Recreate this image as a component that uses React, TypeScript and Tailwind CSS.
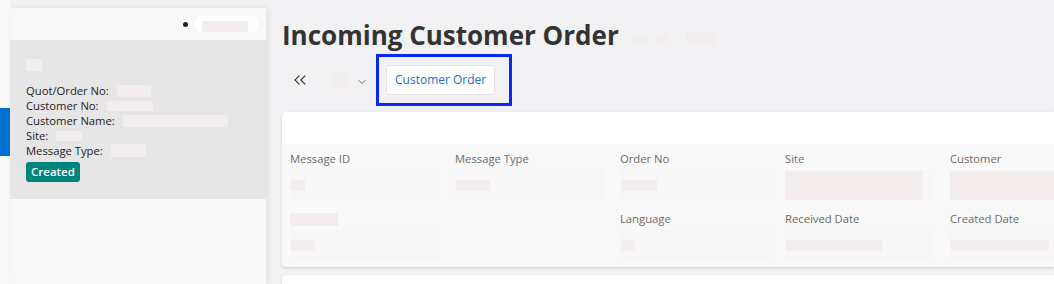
import { ChevronsLeft, ChevronDown } from "lucide-react";

const ph = "bg-[#f3eded]";

interface Field {
  label?: string;
  value?: string;
}

const ROW1: Field[] = [
  { label: "Message ID", value: "w-[14px]" },
  { label: "Message Type", value: "w-[34px]" },
  { label: "Order No", value: "w-[36px]" },
  { label: "Site", value: "big" },
  { label: "Customer", value: "big" },
];

const ROW2: Field[] = [
  { label: undefined, value: "w-[24px]" },
  {},
  { label: "Language", value: "w-[14px]" },
  { label: "Received Date", value: "w-[96px]" },
  { label: "Created Date", value: "w-[98px]" },
];

function FieldCell({ f, placeholderLabel }: { f: Field; placeholderLabel?: boolean }) {
  return (
    <div className="w-[165px] shrink-0 pl-2 pr-2">
      <div className="h-[14px] flex items-center">
        {f.label ? (
          <span className="text-[11.25px] text-[#6b6b6b]">{f.label}</span>
        ) : placeholderLabel ? (
          <div className={`${ph} w-[48px] h-[13px]`} />
        ) : null}
      </div>
      <div className={`mt-[4px] h-[30px] flex items-center ${f.value ? "bg-[#f7f7f7]" : ""}`}>
        {f.value === "big" ? (
          <div className={`${ph} w-[138px] h-[29px]`} />
        ) : f.value ? (
          <div className={`${ph} ${f.value} h-[11px] ml-px`} />
        ) : null}
      </div>
    </div>
  );
}

export default function App() {
  return (
    <div
      className="flex h-[284px] w-[1054px] overflow-hidden bg-[#f2f1f4]"
      style={{ fontFamily: '"Open Sans", sans-serif' }}
    >
      {/* Rail */}
      <div className="w-[10px] shrink-0 bg-[#fafafa] pt-[108px]">
        <div className="h-[48px] bg-[#0070d2]" />
      </div>

      {/* Sidebar */}
      <div className="w-[256px] shrink-0 mt-2 bg-[#f9f9f9] shadow-[2px_0_6px_rgba(0,0,0,0.08)] z-10">
        <div className="h-[32px] flex items-center justify-end pr-2 gap-[6px]">
          <div className="w-[5px] h-[5px] rounded-full bg-[#222]" />
          <div className="w-[64px] h-[16px] rounded-full bg-white flex items-end pl-2">
            <div className={`${ph} w-[46px] h-[11px]`} />
          </div>
        </div>
        <div className="h-[159px] bg-[#e6e6e6] pl-4 pt-[19px] text-[11.25px] text-[#222] leading-[15px]">
          <div className={`${ph} w-[16px] h-[12px]`} />
          <div className="mt-[12px] flex items-center gap-2">
            <span>Quot/Order No:</span>
            <div className={`${ph} w-[34px] h-[12px]`} />
          </div>
          <div className="flex items-center gap-2">
            <span>Customer No:</span>
            <div className={`${ph} w-[46px] h-[10px]`} />
          </div>
          <div className="flex items-center gap-2">
            <span>Customer Name:</span>
            <div className={`${ph} w-[105px] h-[12px]`} />
          </div>
          <div className="flex items-center gap-2">
            <span>Site:</span>
            <div className={`${ph} w-[26px] h-[10px]`} />
          </div>
          <div className="flex items-center gap-2">
            <span>Message Type:</span>
            <div className={`${ph} w-[35px] h-[13px]`} />
          </div>
          <div className="mt-[4px] inline-block rounded-[3px] bg-[#00857d] px-[5px] py-[2px] text-[11.5px] font-semibold text-white leading-[16px]">
            Created
          </div>
        </div>
      </div>

      {/* Main */}
      <div className="flex-1 min-w-0 pl-4 pt-[17px]">
        <div className="flex items-center">
          <h1 className="text-[26px] font-bold text-[#333] leading-[36px]">
            Incoming Customer Order
          </h1>
          <div className="ml-[13px] mt-[8px] flex items-center">
            <div className={`${ph} w-[16px] h-[8px]`} />
            <div className={`${ph} w-[12px] h-[7px] ml-2`} />
            <div className={`${ph} w-[30px] h-[12px] ml-[18px]`} />
          </div>
        </div>

        <div className="flex items-center mt-[1px] h-[52px]">
          <ChevronsLeft className="w-[20px] h-[20px] ml-[8px] text-[#333]" strokeWidth={1.3} />
          <div className={`${ph} w-[14px] h-[15px] ml-[23px]`} />
          <ChevronDown className="w-[12px] h-[12px] ml-[9px] mt-[3px] text-[#444]" strokeWidth={1.5} />
          <div className="ml-[8px] border-[3px] border-[#0a28f5] pl-[7px] pr-[14px] py-[8px]">
            <div className="h-[30px] px-[8px] flex items-center rounded-[3px] bg-white border border-[#e4e4e4] text-[12px] text-[#1c6fc6]">
              Customer Order
            </div>
          </div>
        </div>

        <div className="mt-[6px] rounded-l-[4px] bg-[#f9f9f9] shadow-[0_1px_3px_rgba(0,0,0,0.15)] overflow-hidden">
          <div className="h-[32px] bg-white" />
          <div className="pt-[8px] pb-[7px]">
            <div className="flex">
              {ROW1.map((f, i) => (
                <FieldCell key={i} f={f} />
              ))}
            </div>
            <div className="flex mt-[12px]">
              {ROW2.map((f, i) => (
                <FieldCell key={i} f={f} placeholderLabel={i === 0} />
              ))}
            </div>
          </div>
        </div>

        <div className="mt-[8px] h-[20px] rounded-tl-[4px] bg-white shadow-[0_1px_3px_rgba(0,0,0,0.12)]" />
      </div>
    </div>
  );
}
